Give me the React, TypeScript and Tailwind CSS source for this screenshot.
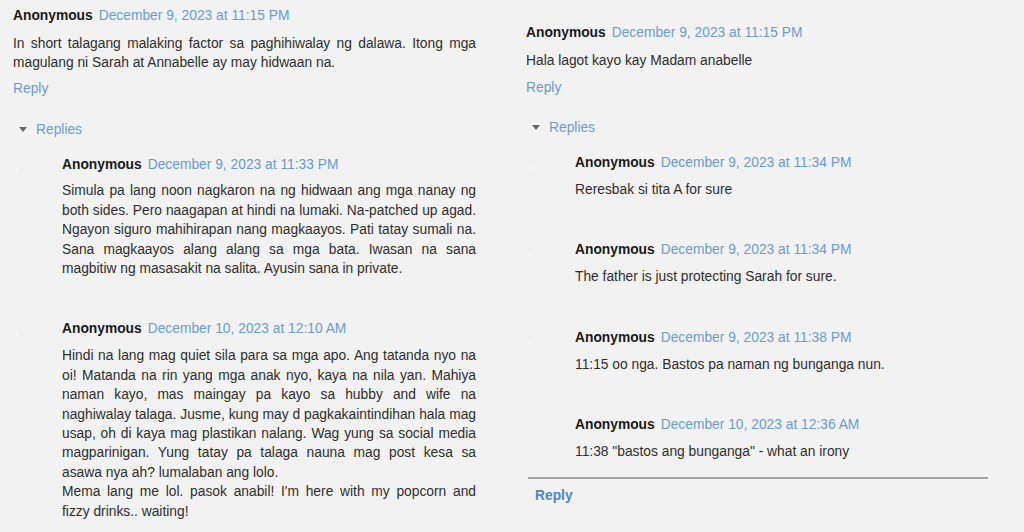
import React from "react";

const DATE = "text-[#6b9bd6]";

function Header({ date }: { date: string }) {
  return (
    <div className="flex items-baseline gap-[6px] whitespace-nowrap">
      <span className="font-bold text-[#1a1a1a]">Anonymous</span>
      <span className={DATE}>{date}</span>
    </div>
  );
}

function Nested({
  date,
  children,
  first,
}: {
  date: string;
  children: React.ReactNode;
  first?: boolean;
}) {
  return (
    <div className={"relative pl-[49px] " + (first ? "mt-[15.5px]" : "mt-[41px]")}>
      <span className="absolute left-[3px] top-[14px] w-[2px] h-[2px] bg-white rounded-full" />
      <Header date={date} />
      <div className="mt-[7.5px] text-justify text-[#2e2e2e]">{children}</div>
    </div>
  );
}

function Replies() {
  return (
    <div className="mt-[21px] flex items-center">
      <span className="ml-[6px] w-0 h-0 border-l-[4px] border-r-[4px] border-t-[5px] border-l-transparent border-r-transparent border-t-[#666]" />
      <span className={"ml-[9px] " + DATE}>Replies</span>
    </div>
  );
}

export default function App() {
  return (
    <div
      className="w-[1024px] h-[532px] overflow-hidden bg-[#f2f2f2] flex text-[13.8px] leading-[19.4px]"
      style={{ fontFamily: '"Liberation Sans", Arial, sans-serif' }}
    >
      {/* Left column */}
      <div className="ml-[13px] w-[463px] pt-[6px] shrink-0">
        <Header date="December 9, 2023 at 11:15 PM" />
        <div className="mt-[8.5px] text-justify text-[#2e2e2e]">
          In short talagang malaking factor sa paghihiwalay ng dalawa. Itong mga
          magulang ni Sarah at Annabelle ay may hidwaan na.
        </div>
        <div className={"mt-[6.5px] " + DATE}>Reply</div>
        <Replies />
        <Nested first date="December 9, 2023 at 11:33 PM">
          Simula pa lang noon nagkaron na ng hidwaan ang mga nanay ng both sides.
          Pero naagapan at hindi na lumaki. Na-patched up agad. Ngayon siguro
          mahihirapan nang magkaayos. Pati tatay sumali na. Sana magkaayos alang
          alang sa mga bata. Iwasan na sana magbitiw ng masasakit na salita.
          Ayusin sana in private.
        </Nested>
        <Nested date="December 10, 2023 at 12:10 AM">
          <div>
            Hindi na lang mag quiet sila para sa mga apo. Ang tatanda nyo na oi!
            Matanda na rin yang mga anak nyo, kaya na nila yan. Mahiya naman kayo,
            mas maingay pa kayo sa hubby and wife na naghiwalay talaga. Jusme, kung
            may d pagkakaintindihan hala mag usap, oh di kaya mag plastikan nalang.
            Wag yung sa social media magparinigan. Yung tatay pa talaga nauna mag
            post kesa sa asawa nya ah? lumalaban ang lolo.
          </div>
          <div className="[text-align-last:justify]">
            Mema lang me lol. pasok anabil! I'm here with my popcorn and
          </div>
          <div>fizzy drinks.. waiting!</div>
        </Nested>
      </div>

      {/* Right column */}
      <div className="ml-[50px] w-[462px] pt-[23px] shrink-0">
        <Header date="December 9, 2023 at 11:15 PM" />
        <div className="mt-[8.5px] text-[#2e2e2e]">Hala lagot kayo kay Madam anabelle</div>
        <div className={"mt-[7.5px] " + DATE}>Reply</div>
        <Replies />
        <Nested first date="December 9, 2023 at 11:34 PM">
          Reresbak si tita A for sure
        </Nested>
        <Nested date="December 9, 2023 at 11:34 PM">
          The father is just protecting Sarah for sure.
        </Nested>
        <Nested date="December 9, 2023 at 11:38 PM">
          11:15 oo nga. Bastos pa naman ng bunganga nun.
        </Nested>
        <Nested date="December 10, 2023 at 12:36 AM">
          11:38 "bastos ang bunganga" - what an irony
        </Nested>
        <div className="mt-[16px] ml-[2px] h-[2px] w-[460px] bg-[#a3a3a3]" />
        <div className="mt-[7px] ml-[9px] font-bold text-[#4f86c6]">Reply</div>
      </div>
    </div>
  );
}
